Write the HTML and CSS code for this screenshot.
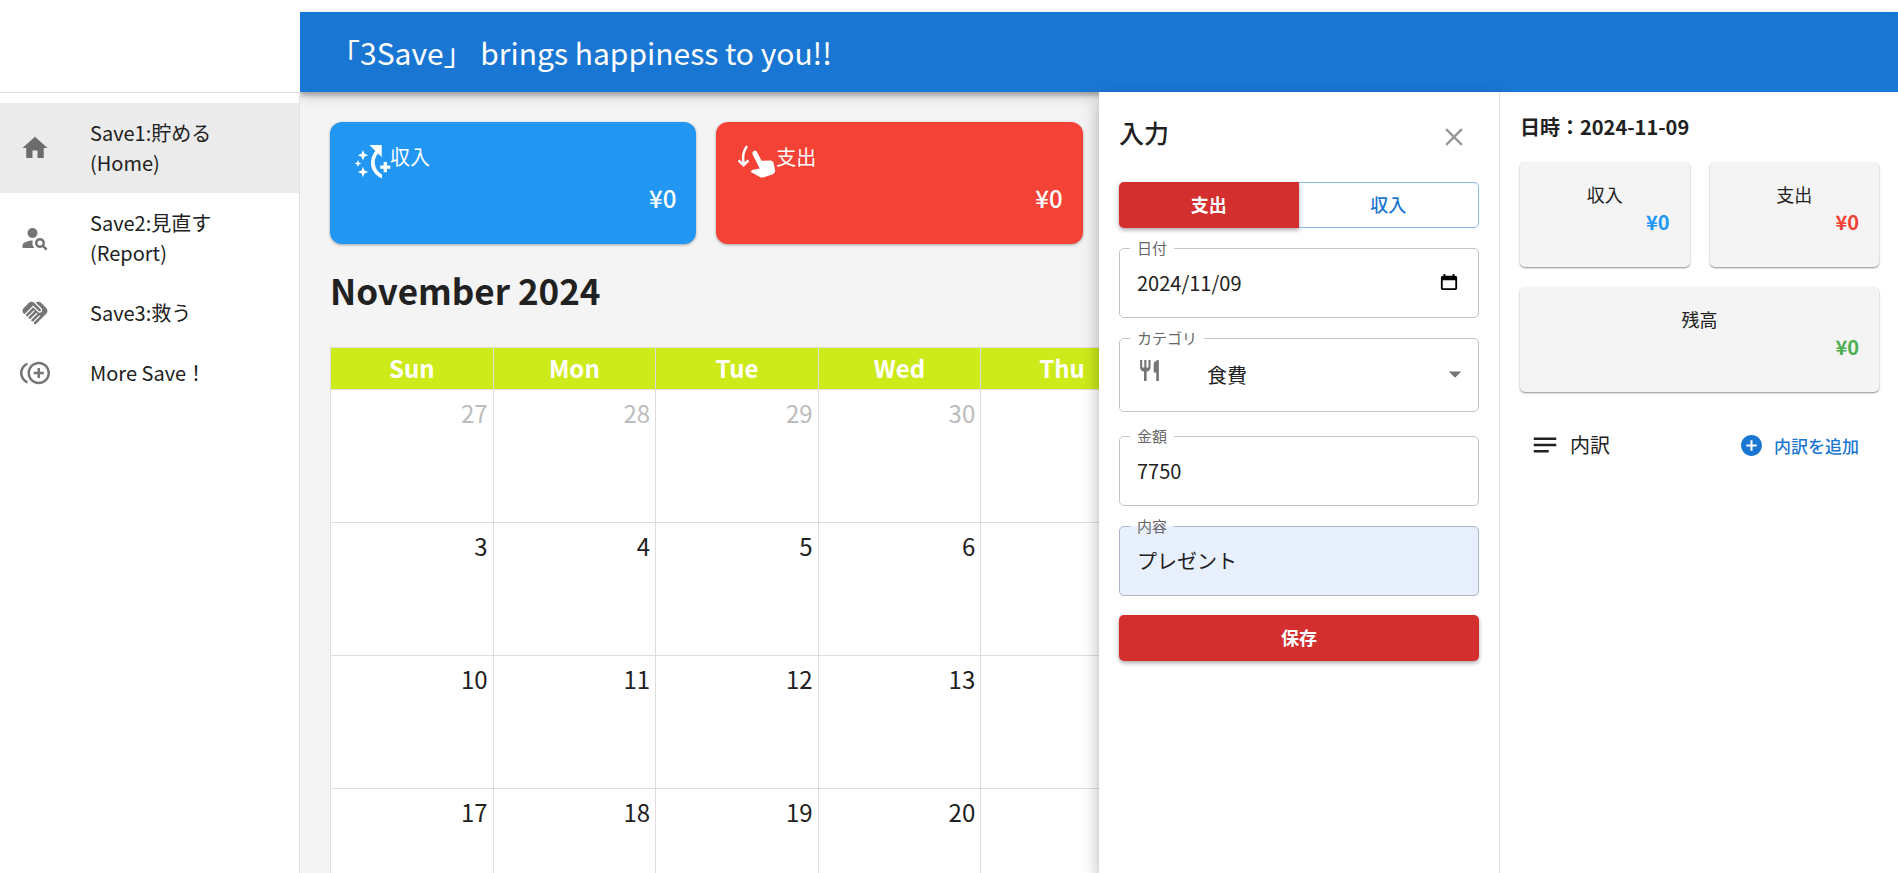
FILE: index.html
```html
<!DOCTYPE html>
<html lang="ja">
<head>
<meta charset="utf-8">
<title>3Save</title>
<link rel="stylesheet" href="styles.css">
</head>
<body>
<div class="app">
  <div class="sidebar">
    <div class="sidebar-top"></div>
    <nav class="nav">
      <a class="nav-item nav-item-active" href="#home">
        <svg class="icon-md" viewBox="0 0 24 24"><path d="M10 20v-6h4v6h5v-8h3L12 3 2 12h3v8z"/></svg>
        <span>Save1:貯める<br>(Home)</span>
      </a>
      <a class="nav-item" href="#report">
        <svg class="icon-md" viewBox="0 0 24 24"><circle cx="10" cy="8" r="4"/><path d="M10.35 14.01C7.62 13.91 2 15.27 2 18v2h9.54c-2.47-2.76-1.23-5.89-1.19-5.99zM19.43 18.02C19.79 17.43 20 16.74 20 16c0-2.21-1.79-4-4-4s-4 1.79-4 4 1.79 4 4 4c.74 0 1.43-.22 2.02-.57L20.59 22 22 20.59l-2.57-2.57zM16 18c-1.1 0-2-.9-2-2s.9-2 2-2 2 .9 2 2-.9 2-2 2z"/></svg>
        <span>Save2:見直す<br>(Report)</span>
      </a>
      <a class="nav-item" href="#help">
        <svg class="icon-md" viewBox="0 0 24 24"><path d="M16.48 10.41c-.39.39-1.04.39-1.43 0l-4.47-4.46-7.05 7.04-.66-.63c-1.17-1.17-1.17-3.07 0-4.24l4.24-4.24c1.17-1.17 3.07-1.17 4.24 0L16.48 9c.39.39.39 1.02 0 1.41zm.7-2.12c.78.78.78 2.05 0 2.83-1.27 1.27-2.61.22-2.83 0l-3.76-3.76-5.57 5.57c-.39.39-.39 1.02 0 1.41.39.39 1.02.39 1.42 0l4.62-4.62.71.71-4.62 4.62c-.39.39-.39 1.02 0 1.41.39.39 1.02.39 1.42 0l4.62-4.62.71.71-4.62 4.62c-.39.39-.39 1.02 0 1.41.39.39 1.02.39 1.41 0l4.62-4.62.71.71-4.62 4.62c-.39.39-.39 1.02 0 1.41.39.39 1.02.39 1.41 0l8.32-8.34c1.17-1.17 1.17-3.07 0-4.24l-4.24-4.24c-1.15-1.15-3.01-1.17-4.18-.06l4.47 4.47z"/></svg>
        <span>Save3:救う</span>
      </a>
      <a class="nav-item" href="#more">
        <svg class="icon-md" viewBox="0 0 24 24"><path d="M16 8h-2v3h-3v2h3v3h2v-3h3v-2h-3zM2 12c0-2.79 1.64-5.2 4.01-6.32V3.52C2.52 4.76 0 8.09 0 12s2.52 7.24 6.01 8.48v-2.16C3.64 17.2 2 14.79 2 12zm13-9c-4.96 0-9 4.04-9 9s4.04 9 9 9 9-4.04 9-9-4.04-9-9-9zm0 16c-3.86 0-7-3.14-7-7s3.14-7 7-7 7 3.14 7 7-3.14 7-7 7z"/></svg>
        <span>More Save！</span>
      </a>
    </nav>
  </div>

  <div class="page">
    <header class="header"><h1 class="header-title">「3Save」 brings happiness to you!!</h1></header>
    <div class="workspace">
      <main class="main">
        <div class="totals">
          <section class="total total-income">
            <div class="total-head">
              <svg class="icon-lg" viewBox="0 0 40 40">
                <path d="M13 8l1.500 3.800L18.300 13.300l-3.800 1.500L13 18.600l-1.500-3.800L7.700 13.300l3.800-1.500zM13 24.700l1.500 3.800 3.800 1.500-3.800 1.500L13 35.300l-1.500-3.800L7.700 30l3.800-1.500zM8 18l1 2.500 2.500 1L9 22.500 8 25l-1-2.500-2.500-1 2.500-1zM19.500 3h12.200v12.200l-3.600-3.600C24.800 15.500 24.600 19 24.900 22c.6 4.500 3 8 7.100 10.500v3.900C25.500 33.500 21.300 28 21 22c-.2-5 1.300-9.500 4.400-13.100zM33.600 20h3.400v3.400h3.400v3.400H37v3.400h-3.400v-3.400h-3.400v-3.400h3.400z"/>
              </svg>
              <span>収入</span>
            </div>
            <p class="total-value">¥0</p>
          </section>
          <section class="total total-expense">
            <div class="total-head">
              <svg class="icon-lg" viewBox="0 0 24 24">
                <path d="M3.8 12.180c-.2-.86-.3-1.760-.3-2.680 0-2.840.99-5.450 2.630-7.500L7.200 3.070C5.820 4.850 5 7.080 5 9.500c0 .88.11 1.740.32 2.560l1.620-1.620L8 11.500 4.500 15 1 11.500l1.060-1.060z"/>
                <path d="M15.350 11.300l-2.680-5.200c-.37-.74-1.270-1.040-2.010-.67-.74.37-1.040 1.270-.67 2.010l4.260 8.520-4.080.7c-.27.04-.49.18-.69.38l-.78.850 5.790 3.200c.56.310 1.210.340 1.810.140l5.800-1.940c1-.33 1.590-1.380 1.370-2.410l-.89-4.160c-.2-.92-1.020-1.580-1.960-1.580z"/>
              </svg>
              <span>支出</span>
            </div>
            <p class="total-value">¥0</p>
          </section>
          <section class="total total-balance"></section>
        </div>

        <h2 class="month">November 2024</h2>
        <table class="calendar">
          <thead>
            <tr><th>Sun</th><th>Mon</th><th>Tue</th><th>Wed</th><th>Thu</th><th></th><th></th></tr>
          </thead>
          <tbody>
            <tr><td class="other">27</td><td class="other">28</td><td class="other">29</td><td class="other">30</td><td></td><td></td><td></td></tr>
            <tr><td>3</td><td>4</td><td>5</td><td>6</td><td></td><td></td><td></td></tr>
            <tr><td>10</td><td>11</td><td>12</td><td>13</td><td></td><td></td><td></td></tr>
            <tr><td>17</td><td>18</td><td>19</td><td>20</td><td></td><td></td><td></td></tr>
          </tbody>
        </table>
      </main>

      <form class="drawer">
        <div class="drawer-head">
          <h2 class="drawer-title">入力</h2>
          <button class="close" type="button" aria-label="閉じる">
            <svg class="icon-md" viewBox="0 0 24 24"><path d="M19 6.410 17.590 5 12 10.590 6.410 5 5 6.410 10.590 12 5 17.590 6.410 19 12 13.410 17.590 19 19 17.590 13.410 12z"/></svg>
          </button>
        </div>
        <div class="switch">
          <button class="switch-button switch-on" type="button">支出</button>
          <button class="switch-button" type="button">収入</button>
        </div>
        <fieldset class="field">
          <legend><label for="date">日付</label></legend>
          <div class="control">
            <input id="date" type="text" value="2024/11/09">
            <button class="picker" type="button" aria-label="日付を選択">
              <svg class="icon-xs" viewBox="0 0 20 20"><path d="M4 1h2v2h8V1h2v2h1a2 2 0 0 1 2 2v12a2 2 0 0 1-2 2H3a2 2 0 0 1-2-2V5a2 2 0 0 1 2-2h1zM3 8v9h14V8z"/></svg>
            </button>
          </div>
        </fieldset>
        <fieldset class="field field-category">
          <legend><label for="category">カテゴリ</label></legend>
          <div class="control">
            <svg class="icon-sm food" viewBox="0 0 24 24"><path d="M11 9H9V2H7v7H5V2H3v7c0 2.120 1.660 3.840 3.750 3.970V22h2.500v-9.030C11.340 12.840 13 11.120 13 9V2h-2zm5-3v8h2.500v8H21V2c-2.760 0-5 2.240-5 4z"/></svg>
            <select id="category"><option>食費</option></select>
            <svg class="icon-md caret" viewBox="0 0 24 24"><path d="m7 10 5 5 5-5z"/></svg>
          </div>
        </fieldset>
        <fieldset class="field field-amount">
          <legend><label for="amount">金額</label></legend>
          <div class="control"><input id="amount" type="text" value="7750"></div>
        </fieldset>
        <fieldset class="field field-filled">
          <legend><label for="content">内容</label></legend>
          <div class="control"><input id="content" type="text" value="プレゼント"></div>
        </fieldset>
        <button class="save" type="submit">保存</button>
      </form>

      <aside class="detail">
        <h2 class="detail-date">日時：2024-11-09</h2>
        <div class="daily">
          <section class="daily-card"><h3>収入</h3><p class="income">¥0</p></section>
          <section class="daily-card"><h3>支出</h3><p class="expense">¥0</p></section>
          <section class="daily-card daily-wide"><h3>残高</h3><p class="balance">¥0</p></section>
        </div>
        <div class="breakdown">
          <div class="breakdown-title">
            <svg class="icon-md" viewBox="0 0 24 24"><path d="M3 11h18v2H3zM3 16h12v2H3zM3 6h18v2H3z"/></svg>
            <span>内訳</span>
          </div>
          <button class="add" type="button">
            <svg class="icon-sm" viewBox="0 0 24 24"><path d="M12 2C6.480 2 2 6.480 2 12s4.480 10 10 10 10-4.480 10-10S17.520 2 12 2zm5 11h-4v4h-2v-4H7v-2h4V7h2v4h4z"/></svg>
            <span>内訳を追加</span>
          </button>
        </div>
      </aside>
    </div>
  </div>
</div>
</body>
</html>
```
FILE: styles.css
```css
* {
  box-sizing: border-box;
}

body,
h1,
h2,
h3,
p {
  margin: 0;
}

body,
button,
input,
select {
  font-family: "Noto Sans CJK JP", "Noto Sans", sans-serif;
  font-size: 20px;
  color: #212121;
}

body {
  line-height: 30px;
  background: #fff;
}

button {
  border: 0;
  padding: 0;
  background: none;
  cursor: pointer;
}

svg {
  display: block;
  flex: none;
  fill: currentColor;
}

.icon-xs { width: 18px; height: 18px; }
.icon-sm { width: 25px; height: 25px; }
.icon-md { width: 30px; height: 30px; }
.icon-lg { width: 40px; height: 40px; overflow: visible; }

.app {
  display: flex;
  height: 100vh;
  overflow: hidden;
}

/* Sidebar */
.sidebar {
  position: relative;
  z-index: 3;
  display: flex;
  flex-direction: column;
  flex: none;
  width: 300px;
  background: #fff;
}

.sidebar-top {
  height: 93px;
  border-bottom: 1px solid #e0e0e0;
}

.nav {
  flex: 1;
  padding: 10px 0;
  border-right: 1px solid #e0e0e0;
}

.nav-item {
  display: flex;
  align-items: center;
  gap: 40px;
  padding: 15px 20px;
  color: #212121;
  text-decoration: none;
}

.nav-item svg { color: #757575; }
.nav-item-active { background: #ebebeb; }
.nav-item-active svg { color: #6c6c6c; }

/* Page */
.page {
  display: flex;
  flex-direction: column;
  flex: 1;
  min-width: 0;
  padding-top: 12px;
}

.header {
  position: relative;
  z-index: 1;
  display: flex;
  align-items: center;
  flex: none;
  height: 80px;
  padding: 0 30px;
  color: #fff;
  background: #1976d2;
  box-shadow: 0 3px 5px rgba(0, 0, 0, .3), 0 6px 12px rgba(0, 0, 0, .12);
}

.header-title {
  font-size: 30px;
  font-weight: 400;
}

.workspace {
  position: relative;
  display: flex;
  flex: 1;
  min-height: 0;
}

.main {
  flex: 1;
  min-width: 0;
  padding: 30px;
  overflow: hidden;
  background: #f4f4f4;
}

.totals {
  display: grid;
  grid-template-columns: repeat(3, 1fr);
  gap: 20px;
  margin-bottom: 20px;
}

.total {
  padding: 20px 20px 30px;
  color: #fff;
  border-radius: 12px;
  box-shadow: 0 1px 3px rgba(0, 0, 0, .35);
}

.total-income { background: #2196f3; }
.total-expense { background: #f44336; }
.total-balance { background: #4caf50; }

.total-head {
  display: flex;
  align-items: flex-start;
}

.total-value {
  font-size: 24px;
  font-weight: 500;
  line-height: 32px;
  text-align: right;
}

.month {
  margin-bottom: 32px;
  font-size: 35px;
  line-height: 51px;
}

.calendar {
  width: 100%;
  table-layout: fixed;
  border-collapse: collapse;
  font-size: 24px;
  line-height: 36px;
  background: #fff;
}

.calendar th,
.calendar td {
  border: 1px solid #ddd;
}

.calendar th {
  height: 42px;
  padding: 0 0 2px;
  color: #fff;
  background: #cdea1b;
}

.calendar td {
  height: 133px;
  padding: 5px;
  text-align: right;
  vertical-align: top;
}

.calendar .other { color: #bcbcbc; }

/* Entry drawer */
.drawer {
  position: absolute;
  z-index: 2;
  top: 0;
  right: 399px;
  bottom: 0;
  display: flex;
  flex-direction: column;
  gap: 9px;
  width: 400px;
  padding: 20px;
  background: #fff;
  box-shadow: 0 8px 16px rgba(0, 0, 0, .3);
}

.drawer-head {
  display: flex;
  justify-content: space-between;
  height: 61px;
}

.drawer-title {
  font-size: 25px;
  font-weight: 500;
  line-height: 40px;
}

.close {
  align-self: flex-start;
  padding: 10px;
  color: #999;
}

.switch {
  display: flex;
}

.switch-button {
  flex: 1;
  height: 46px;
  padding-bottom: 2px;
  font-size: 18px;
  font-weight: 500;
  color: #1976d2;
  border: 1px solid #8cbae8;
  border-left: 0;
  border-radius: 0 5px 5px 0;
}

.switch-on,
.save {
  font-weight: 700;
  color: #fff;
  background: #d32f2f;
  box-shadow: 0 2px 4px rgba(0, 0, 0, .35);
}

.switch-on {
  border: 0;
  border-radius: 5px 0 0 5px;
}

.field {
  min-width: 0;
  margin: 0;
  padding: 0 0 12px;
  border: 1px solid #c4c4c4;
  border-radius: 5px;
}

.field legend {
  margin-left: 10px;
  padding: 0 7px;
  font-size: 15px;
  line-height: 22px;
  color: #666;
}

.control {
  position: relative;
  display: flex;
  align-items: center;
}

.control input,
.control select {
  width: 100%;
  height: 46px;
  padding: 0 17px;
  border: 0;
  outline: 0;
  appearance: none;
  background: none;
}

.control select {
  height: 50px;
  padding-left: 87px;
}

.field-amount { margin-top: 4px; }

.field-filled {
  border-color: #abb5c6;
  background: #e8f0fe;
}

.picker {
  position: absolute;
  right: 20px;
  color: #000;
}

.food,
.caret {
  position: absolute;
  color: #757575;
  pointer-events: none;
}

.food { top: 9px; left: 17px; }
.caret { right: 8px; }

.save {
  height: 46px;
  padding-bottom: 2px;
  margin-top: 10px;
  font-size: 18px;
  border-radius: 5px;
}

/* Day detail */
.detail {
  position: relative;
  z-index: 2;
  flex: none;
  width: 399px;
  padding: 20px 19px 20px 20px;
  border-left: 1px solid #e0e0e0;
  background: #fff;
}

.detail-date {
  margin-bottom: 20px;
  font-size: 20px;
}

.daily {
  display: grid;
  grid-template-columns: 1fr 1fr;
  gap: 20px;
}

.daily-card {
  padding: 20px;
  border-radius: 5px;
  background: #f4f4f4;
  box-shadow: 0 1px 2px rgba(0, 0, 0, .45);
}

.daily-card h3 {
  font-size: 18px;
  font-weight: 400;
  line-height: 25px;
  text-align: center;
}

.daily-card p {
  padding-bottom: 10px;
  font-weight: 700;
  text-align: right;
}

.daily-wide { grid-column: span 2; }

.income { color: #2196f3; }
.expense { color: #f44336; }
.balance { color: #4caf50; }

.breakdown {
  display: flex;
  align-items: center;
  justify-content: space-between;
  margin-top: 38px;
  padding: 0 20px 0 10px;
}

.breakdown-title,
.add {
  display: flex;
  align-items: center;
  gap: 10px;
}

.add {
  font-size: 17px;
  font-weight: 500;
  color: #1976d2;
}
```
